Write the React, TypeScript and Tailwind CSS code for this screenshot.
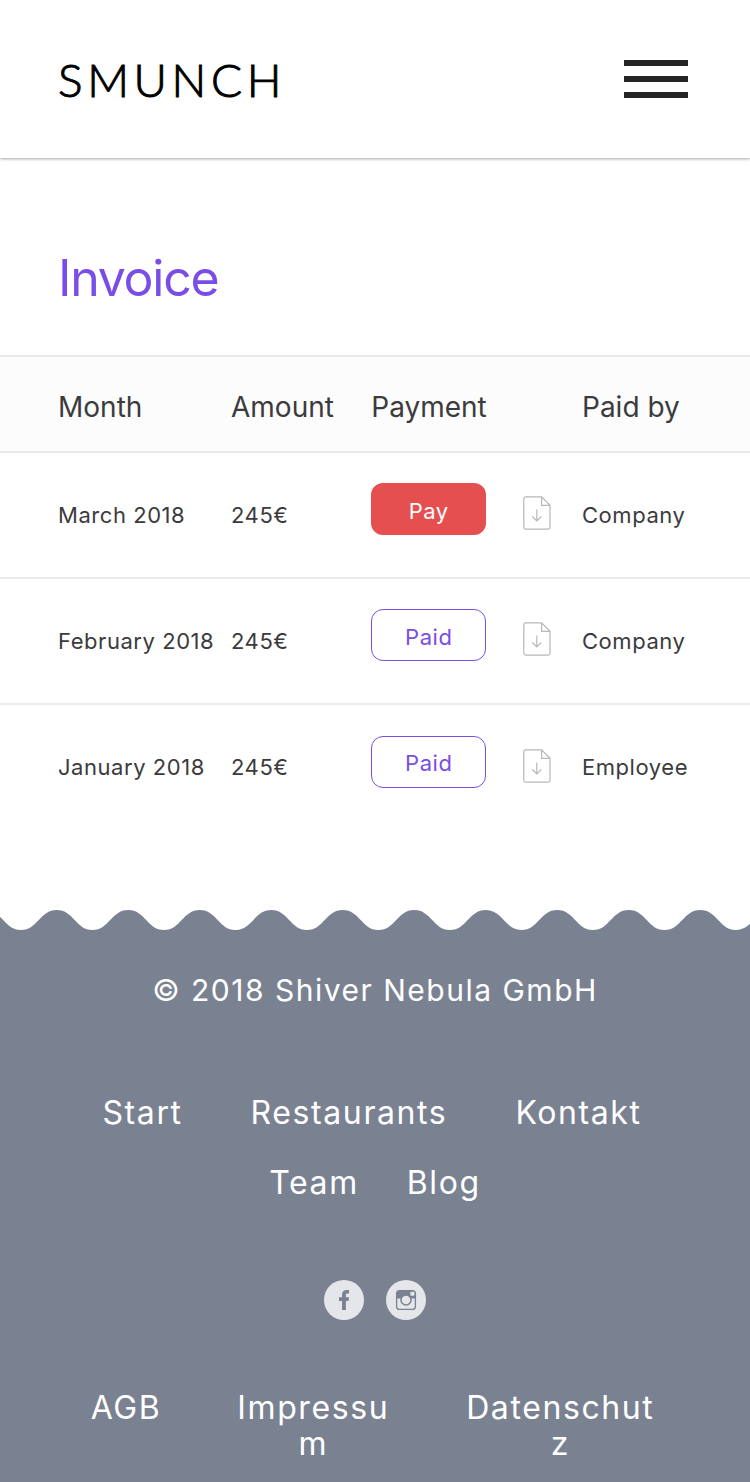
type Invoice = { month: string; amount: string; paid: boolean; paidBy: string };

const invoices: Invoice[] = [
  { month: "March 2018", amount: "245€", paid: false, paidBy: "Company" },
  { month: "February 2018", amount: "245€", paid: true, paidBy: "Company" },
  { month: "January 2018", amount: "245€", paid: true, paidBy: "Employee" },
];

const wavePath = (() => {
  let d = "M-14.75 0";
  for (let i = 0; i < 11; i += 1) {
    d += " c17 0 19 20 35.75 20 s18.75 -20 35.75 -20";
  }
  return `${d} V22 H-14.75 Z`;
})();

function DownloadIcon() {
  return (
    <svg className="block h-[34px] w-7" viewBox="0 0 28 34" fill="none" stroke="#b5b8bd" strokeWidth="1.2" aria-hidden="true">
      <path d="M18.6 .9H2.6Q.8 .9 .8 2.7V31.3Q.8 33.1 2.6 33.1H25.2Q27 33.1 27 31.3V9.3ZM18.6 .9V9.3H27" />
      <path d="M13.8 13.5V25M9.3 20.5L13.8 25L18.3 20.5" />
    </svg>
  );
}

function Header() {
  return (
    <header className="flex h-[158px] items-center justify-between px-[58px] shadow-[0_1px_3px_rgba(0,0,0,0.35)]">
      <a href="#home" className="pt-0.5 font-[Lato] text-[46px] leading-[58px] font-light tracking-widest text-black [-webkit-text-stroke:1px]">
        SMUNCH
      </a>
      <button type="button" aria-label="Menu" className="mr-1 flex w-16 flex-col gap-2.5">
        <span className="h-1.5 w-full bg-[#242625]" />
        <span className="h-1.5 w-full bg-[#242625]" />
        <span className="h-1.5 w-full bg-[#242625]" />
      </button>
    </header>
  );
}

function InvoiceTable() {
  return (
    <table className="w-full table-fixed border-collapse text-left text-[#3b3b3d]">
      <colgroup>
        <col className="w-[30.8%]" />
        <col className="w-[18.7%]" />
        <col className="w-[20.2%]" />
        <col className="w-[7.9%]" />
        <col />
      </colgroup>
      <thead>
        <tr className="h-24 border-y-2 border-[#ebebeb] bg-[#fcfcfc] text-[28px]">
          <th scope="col" className="pt-1.5 pl-[58px] font-normal">Month</th>
          <th scope="col" className="pt-1.5 font-normal">Amount</th>
          <th scope="col" colSpan={2} className="pt-1.5 font-normal">Payment</th>
          <th scope="col" className="pt-1.5 font-normal">Paid by</th>
        </tr>
      </thead>
      <tbody>
        {invoices.map((invoice) => (
          <tr key={invoice.month} className="h-[126px] border-b-2 border-[#ebebeb] text-[22px] tracking-wide last:border-b-0">
            <td className="pl-[58px] whitespace-nowrap">{invoice.month}</td>
            <td>{invoice.amount}</td>
            <td className="pb-3">
              <button
                type="button"
                className={
                  invoice.paid
                    ? "block h-[52px] w-[115px] rounded-xl border border-[#794ee6] pt-1 text-[#794ee6]"
                    : "block h-[52px] w-[115px] rounded-xl bg-[#e54f4f] pt-1 text-white"
                }
              >
                {invoice.paid ? "Paid" : "Pay"}
              </button>
            </td>
            <td className="pb-1">
              <a href="#download" aria-label={`Download invoice for ${invoice.month}`} className="block w-7">
                <DownloadIcon />
              </a>
            </td>
            <td>{invoice.paidBy}</td>
          </tr>
        ))}
      </tbody>
    </table>
  );
}

function Footer() {
  return (
    <footer className="mt-20 text-white">
      <svg className="block h-[22px] w-full" viewBox="0 0 750 22" preserveAspectRatio="none" aria-hidden="true">
        <path d={wavePath} fill="#7a8292" />
      </svg>
      <div className="bg-[#7a8292] pt-9 pb-5 text-center">
        <p className="text-[30px] leading-[44px] tracking-wider">© 2018 Shiver Nebula GmbH</p>
        <nav aria-label="Footer" className="mt-[66px] text-[32px] leading-[70px] tracking-wider">
          <div className="flex justify-center gap-[68px] pr-1.5">
            <a href="#start">Start</a>
            <a href="#restaurants">Restaurants</a>
            <a href="#kontakt">Kontakt</a>
          </div>
          <div className="flex justify-center gap-12">
            <a href="#team">Team</a>
            <a href="#blog">Blog</a>
          </div>
        </nav>
        <div className="mt-[62px] flex justify-center gap-[22px]">
          <a href="#facebook" aria-label="Facebook">
            <svg className="block size-10" viewBox="0 0 40 40" aria-hidden="true">
              <circle cx="20" cy="20" r="20" fill="#e4e6ea" />
              <path d="M18 30V21H15V17.2H18V14.7C18 11.6 19.8 10 22.6 10H25V13.5H23.3C22.2 13.5 21.9 14 21.9 15V17.2H25L24.6 21H21.9V30Z" fill="#7a8292" />
            </svg>
          </a>
          <a href="#instagram" aria-label="Instagram">
            <svg className="block size-10" viewBox="0 0 40 40" aria-hidden="true">
              <circle cx="20" cy="20" r="20" fill="#e4e6ea" />
              <rect x="10.6" y="10.6" width="18.8" height="18.8" rx="3" fill="none" stroke="#7a8292" strokeWidth="1.3" />
              <path d="M10.5 18.5V13.5Q10.5 10.5 13.5 10.5H26Q29.5 10.5 29.5 14V18.5Z" fill="#7a8292" />
              <circle cx="20" cy="20" r="5.8" fill="#7a8292" />
              <circle cx="20" cy="20" r="4.3" fill="#e4e6ea" />
              <rect x="24.4" y="11.8" width="4" height="4" rx=".8" fill="#e4e6ea" />
            </svg>
          </a>
        </div>
        <nav aria-label="Legal" className="mt-[70px] flex justify-center gap-[76px] pr-1 text-[32px] leading-9 tracking-wider break-all">
          <a href="#agb">AGB</a>
          <a href="#impressum" className="w-[152px]">Impressum</a>
          <a href="#datenschutz" className="w-[190px]">Datenschutz</a>
        </nav>
      </div>
    </footer>
  );
}

export default function App() {
  return (
    <div className="bg-white font-[Inter,sans-serif]">
      <Header />
      <main>
        <h1 className="px-[58px] pt-[88px] pb-[45px] text-[50px] leading-[64px] tracking-tight text-[#794ee6]">Invoice</h1>
        <InvoiceTable />
      </main>
      <Footer />
    </div>
  );
}
